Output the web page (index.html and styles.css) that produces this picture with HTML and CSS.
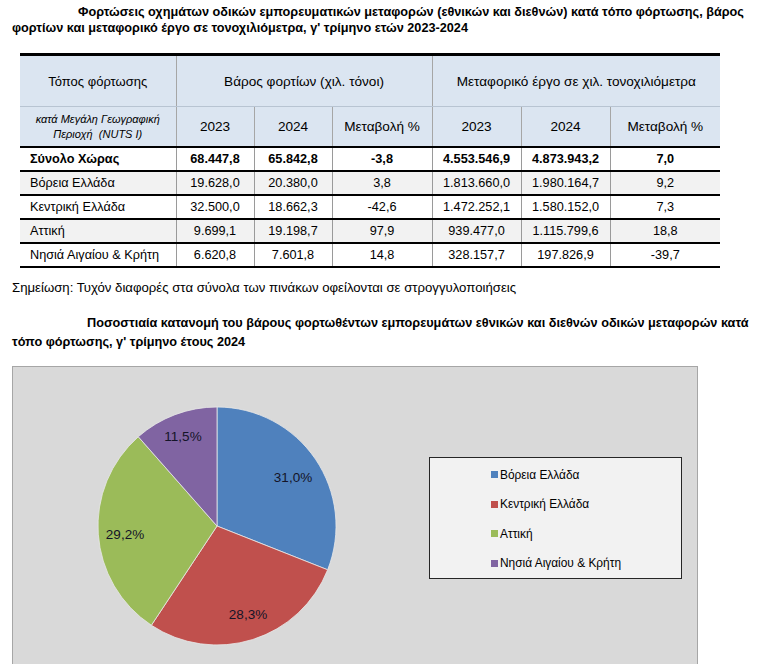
FILE: index.html
```html
<!DOCTYPE html>
<html lang="el">
<head>
<meta charset="utf-8">
<title>Φορτώσεις οχημάτων</title>
<link rel="stylesheet" href="styles.css">
</head>
<body>
<p class="title title-1">Φορτώσεις οχημάτων οδικών εμπορευματικών μεταφορών (εθνικών και διεθνών) κατά τόπο φόρτωσης, βάρος<br>φορτίων και μεταφορικό έργο σε τονοχιλιόμετρα, γ' τρίμηνο ετών 2023-2024</p>

<table class="data">
  <colgroup>
    <col class="c-region"><col class="c-num"><col class="c-num"><col class="c-chg"><col class="c-num2"><col class="c-num2"><col class="c-chg2">
  </colgroup>
  <thead>
    <tr class="h1">
      <th class="first">Τόπος φόρτωσης</th>
      <th colspan="3">Βάρος φορτίων (χιλ. τόνοι)</th>
      <th colspan="3">Μεταφορικό έργο σε χιλ. τονοχιλιόμετρα</th>
    </tr>
    <tr class="h2">
      <th class="sub">κατά Μεγάλη Γεωγραφική<br>Περιοχή&nbsp; (NUTS I)</th>
      <th>2023</th><th>2024</th><th>Μεταβολή %</th>
      <th>2023</th><th>2024</th><th>Μεταβολή %</th>
    </tr>
  </thead>
  <tbody>
    <tr class="total">
      <td>Σύνολο Χώρας</td><td>68.447,8</td><td>65.842,8</td><td>-3,8</td><td>4.553.546,9</td><td>4.873.943,2</td><td>7,0</td>
    </tr>
    <tr class="shade">
      <td>Βόρεια Ελλάδα</td><td>19.628,0</td><td>20.380,0</td><td>3,8</td><td>1.813.660,0</td><td>1.980.164,7</td><td>9,2</td>
    </tr>
    <tr>
      <td>Κεντρική Ελλάδα</td><td>32.500,0</td><td>18.662,3</td><td>-42,6</td><td>1.472.252,1</td><td>1.580.152,0</td><td>7,3</td>
    </tr>
    <tr class="shade">
      <td>Αττική</td><td>9.699,1</td><td>19.198,7</td><td>97,9</td><td>939.477,0</td><td>1.115.799,6</td><td>18,8</td>
    </tr>
    <tr>
      <td>Νησιά Αιγαίου &amp; Κρήτη</td><td>6.620,8</td><td>7.601,8</td><td>14,8</td><td>328.157,7</td><td>197.826,9</td><td>-39,7</td>
    </tr>
  </tbody>
</table>

<p class="note">Σημείωση: Τυχόν διαφορές στα σύνολα των πινάκων οφείλονται σε στρογγυλοποιήσεις</p>

<p class="title title-2">Ποσοστιαία κατανομή του βάρους φορτωθέντων εμπορευμάτων εθνικών και διεθνών οδικών μεταφορών κατά<br>τόπο φόρτωσης, γ' τρίμηνο έτους 2024</p>

<div class="chart">
  <svg class="pie" width="240" height="240" viewBox="0 0 240 240">
    <g stroke="#e8e8e8" stroke-width="0.8">
      <path d="M120 120 L120 1 A119 119 0 0 1 230.65 163.8 Z" fill="#4f81bd"/>
      <path d="M120 120 L230.65 163.8 A119 119 0 0 1 54.36 219.26 Z" fill="#c0504d"/>
      <path d="M120 120 L54.36 219.26 A119 119 0 0 1 41.31 30.73 Z" fill="#9bbb59"/>
      <path d="M120 120 L41.31 30.73 A119 119 0 0 1 120 1 Z" fill="#8064a2"/>
    </g>
    <g class="pie-labels" text-anchor="middle">
      <text x="196" y="76">31,0%</text>
      <text x="151" y="213">28,3%</text>
      <text x="28" y="133">29,2%</text>
      <text x="86" y="35">11,5%</text>
    </g>
  </svg>
  <ul class="legend">
    <li><span class="sw sw-blue"></span>Βόρεια Ελλάδα</li>
    <li><span class="sw sw-red"></span>Κεντρική Ελλάδα</li>
    <li><span class="sw sw-green"></span>Αττική</li>
    <li><span class="sw sw-purple"></span>Νησιά Αιγαίου &amp; Κρήτη</li>
  </ul>
</div>
</body>
</html>
```

FILE: styles.css
```css
html, body {
  margin: 0;
  padding: 0;
  background: #ffffff;
}
html {
  height: 664px;
  overflow: hidden;
}
body {
  height: 664px;
  padding: 0 12px;
  box-sizing: border-box;
  font-family: "Liberation Sans", Arial, sans-serif;
  color: #000;
  overflow: hidden;
}
.title {
  margin: 0;
  font-weight: bold;
  font-size: 12.7px;
  line-height: 16px;
  white-space: nowrap;
}
.title-1 {
  padding-top: 4px;
  text-indent: 66px;
}
.data {
  margin: 17px 0 0 8px;
  width: 700px;
  border-collapse: collapse;
  table-layout: fixed;
  font-size: 12.7px;
}
.c-region { width: 156px; }
.c-num { width: 78px; }
.c-chg { width: 100px; }
.c-num2 { width: 89px; }
.c-chg2 { width: 110px; }
.data th {
  background: #dbe5f1;
  font-weight: normal;
  font-size: 13.6px;
  text-align: center;
  border-left: 1px solid #a6a6a6;
  border-right: 1px solid #a6a6a6;
  padding: 0;
}
.data th:first-child { border-left: none; }
.data th:last-child { border-right: none; }
.data th.first { font-size: 13px; }
.data thead tr.h1 th {
  border-top: 3px solid #000;
  height: 50px;
  border-bottom: 1px solid #b8c4d2;
}
.data thead tr.h2 th {
  height: 39px;
}
.data th.sub {
  font-style: italic;
  font-size: 11px;
  line-height: 15px;
}
.data td {
  height: 22px;
  padding: 0;
  text-align: center;
  border-top: 2px solid #000;
  border-left: 1px solid #9a9a9a;
  border-right: 1px solid #9a9a9a;
}
.data td:first-child {
  text-align: left;
  padding-left: 10px;
  border-left: none;
}
.data td:last-child { border-right: none; }
.data tbody tr:last-child td { border-bottom: 2px solid #000; }
.data tr.total td { font-weight: bold; }
.data tr.shade td { background: #f2f2f2; }

.note {
  margin: 12px 0 0 0;
  font-size: 13.2px;
  line-height: 16px;
}
.title-2 {
  margin-top: 18px;
  text-indent: 75px;
  line-height: 19px;
}
.chart {
  margin-top: 14px;
  height: 320px;
  background: #d9d9d9;
  border: 1px solid #a6a6a6;
  display: flex;
  align-items: flex-start;
  padding: 39px 0 0 84px;
  box-sizing: border-box;
  width: 686px;
}
.pie { display: block; flex: none; }
.pie-labels {
  font-family: "Liberation Sans", Arial, sans-serif;
  font-size: 13.5px;
  fill: #141428;
}
.legend {
  list-style: none;
  margin: 51px 0 0 92px;
  padding: 2px 0 0 61px;
  width: 253px;
  height: 122px;
  box-sizing: border-box;
  background: #f2f2f2;
  border: 1px solid #262626;
  font-size: 11.9px;
  display: flex;
  flex-direction: column;
}
.legend li {
  height: 30.7px;
  display: flex;
  align-items: center;
}
.sw {
  display: inline-block;
  width: 7px;
  height: 7px;
  margin-right: 2px;
}
.sw-blue { background: #4f81bd; }
.sw-red { background: #c0504d; }
.sw-green { background: #9bbb59; }
.sw-purple { background: #8064a2; }
```
